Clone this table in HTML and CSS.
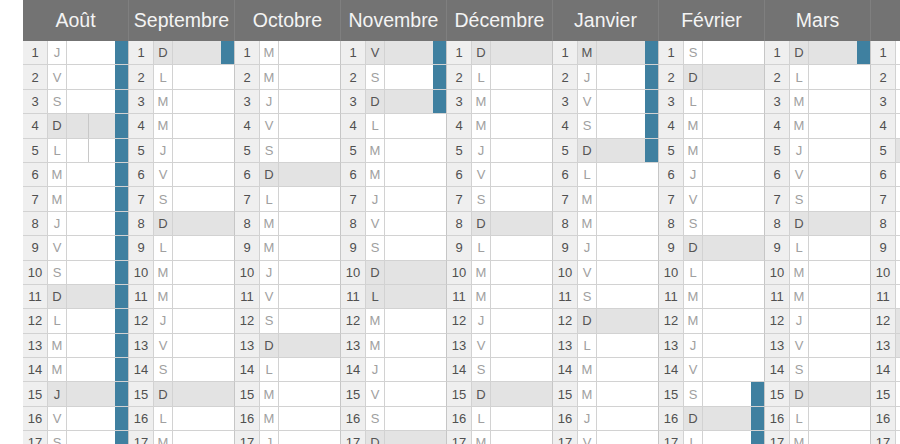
FILE: index.html
```html
<!DOCTYPE html>
<html lang="fr">
<head>
<meta charset="utf-8">
<title>Calendrier scolaire</title>
<link rel="stylesheet" href="styles.css">
</head>
<body>
<div class="cal">
  <div class="month">
    <div class="mh">Août</div>
    <div class="row m"><span class="n">1</span><span class="d">J</span><span class="t"></span><span class="k"></span></div>
    <div class="row m"><span class="n">2</span><span class="d">V</span><span class="t"></span><span class="k"></span></div>
    <div class="row m"><span class="n">3</span><span class="d">S</span><span class="t"></span><span class="k"></span></div>
    <div class="row m g"><span class="n">4</span><span class="d">D</span><span class="t split"><span class="s1"></span><span class="s2"></span></span><span class="k"></span></div>
    <div class="row m"><span class="n">5</span><span class="d">L</span><span class="t split"><span class="s1"></span><span class="s2"></span></span><span class="k"></span></div>
    <div class="row m"><span class="n">6</span><span class="d">M</span><span class="t"></span><span class="k"></span></div>
    <div class="row m"><span class="n">7</span><span class="d">M</span><span class="t"></span><span class="k"></span></div>
    <div class="row m"><span class="n">8</span><span class="d">J</span><span class="t"></span><span class="k"></span></div>
    <div class="row m"><span class="n">9</span><span class="d">V</span><span class="t"></span><span class="k"></span></div>
    <div class="row m"><span class="n">10</span><span class="d">S</span><span class="t"></span><span class="k"></span></div>
    <div class="row m g"><span class="n">11</span><span class="d">D</span><span class="t"></span><span class="k"></span></div>
    <div class="row m"><span class="n">12</span><span class="d">L</span><span class="t"></span><span class="k"></span></div>
    <div class="row m"><span class="n">13</span><span class="d">M</span><span class="t"></span><span class="k"></span></div>
    <div class="row m"><span class="n">14</span><span class="d">M</span><span class="t"></span><span class="k"></span></div>
    <div class="row m g"><span class="n">15</span><span class="d">J</span><span class="t"></span><span class="k"></span></div>
    <div class="row m"><span class="n">16</span><span class="d">V</span><span class="t"></span><span class="k"></span></div>
    <div class="row m"><span class="n">17</span><span class="d">S</span><span class="t"></span><span class="k"></span></div>
  </div>
  <div class="month">
    <div class="mh">Septembre</div>
    <div class="row m g"><span class="n">1</span><span class="d">D</span><span class="t"></span><span class="k"></span></div>
    <div class="row"><span class="n">2</span><span class="d">L</span><span class="t"></span><span class="k"></span></div>
    <div class="row"><span class="n">3</span><span class="d">M</span><span class="t"></span><span class="k"></span></div>
    <div class="row"><span class="n">4</span><span class="d">M</span><span class="t"></span><span class="k"></span></div>
    <div class="row"><span class="n">5</span><span class="d">J</span><span class="t"></span><span class="k"></span></div>
    <div class="row"><span class="n">6</span><span class="d">V</span><span class="t"></span><span class="k"></span></div>
    <div class="row"><span class="n">7</span><span class="d">S</span><span class="t"></span><span class="k"></span></div>
    <div class="row g"><span class="n">8</span><span class="d">D</span><span class="t"></span><span class="k"></span></div>
    <div class="row"><span class="n">9</span><span class="d">L</span><span class="t"></span><span class="k"></span></div>
    <div class="row"><span class="n">10</span><span class="d">M</span><span class="t"></span><span class="k"></span></div>
    <div class="row"><span class="n">11</span><span class="d">M</span><span class="t"></span><span class="k"></span></div>
    <div class="row"><span class="n">12</span><span class="d">J</span><span class="t"></span><span class="k"></span></div>
    <div class="row"><span class="n">13</span><span class="d">V</span><span class="t"></span><span class="k"></span></div>
    <div class="row"><span class="n">14</span><span class="d">S</span><span class="t"></span><span class="k"></span></div>
    <div class="row g"><span class="n">15</span><span class="d">D</span><span class="t"></span><span class="k"></span></div>
    <div class="row"><span class="n">16</span><span class="d">L</span><span class="t"></span><span class="k"></span></div>
    <div class="row"><span class="n">17</span><span class="d">M</span><span class="t"></span><span class="k"></span></div>
  </div>
  <div class="month">
    <div class="mh">Octobre</div>
    <div class="row"><span class="n">1</span><span class="d">M</span><span class="t"></span><span class="k"></span></div>
    <div class="row"><span class="n">2</span><span class="d">M</span><span class="t"></span><span class="k"></span></div>
    <div class="row"><span class="n">3</span><span class="d">J</span><span class="t"></span><span class="k"></span></div>
    <div class="row"><span class="n">4</span><span class="d">V</span><span class="t"></span><span class="k"></span></div>
    <div class="row"><span class="n">5</span><span class="d">S</span><span class="t"></span><span class="k"></span></div>
    <div class="row g"><span class="n">6</span><span class="d">D</span><span class="t"></span><span class="k"></span></div>
    <div class="row"><span class="n">7</span><span class="d">L</span><span class="t"></span><span class="k"></span></div>
    <div class="row"><span class="n">8</span><span class="d">M</span><span class="t"></span><span class="k"></span></div>
    <div class="row"><span class="n">9</span><span class="d">M</span><span class="t"></span><span class="k"></span></div>
    <div class="row"><span class="n">10</span><span class="d">J</span><span class="t"></span><span class="k"></span></div>
    <div class="row"><span class="n">11</span><span class="d">V</span><span class="t"></span><span class="k"></span></div>
    <div class="row"><span class="n">12</span><span class="d">S</span><span class="t"></span><span class="k"></span></div>
    <div class="row g"><span class="n">13</span><span class="d">D</span><span class="t"></span><span class="k"></span></div>
    <div class="row"><span class="n">14</span><span class="d">L</span><span class="t"></span><span class="k"></span></div>
    <div class="row"><span class="n">15</span><span class="d">M</span><span class="t"></span><span class="k"></span></div>
    <div class="row"><span class="n">16</span><span class="d">M</span><span class="t"></span><span class="k"></span></div>
    <div class="row"><span class="n">17</span><span class="d">J</span><span class="t"></span><span class="k"></span></div>
  </div>
  <div class="month">
    <div class="mh">Novembre</div>
    <div class="row m g"><span class="n">1</span><span class="d">V</span><span class="t"></span><span class="k"></span></div>
    <div class="row m"><span class="n">2</span><span class="d">S</span><span class="t"></span><span class="k"></span></div>
    <div class="row m g"><span class="n">3</span><span class="d">D</span><span class="t"></span><span class="k"></span></div>
    <div class="row"><span class="n">4</span><span class="d">L</span><span class="t"></span><span class="k"></span></div>
    <div class="row"><span class="n">5</span><span class="d">M</span><span class="t"></span><span class="k"></span></div>
    <div class="row"><span class="n">6</span><span class="d">M</span><span class="t"></span><span class="k"></span></div>
    <div class="row"><span class="n">7</span><span class="d">J</span><span class="t"></span><span class="k"></span></div>
    <div class="row"><span class="n">8</span><span class="d">V</span><span class="t"></span><span class="k"></span></div>
    <div class="row"><span class="n">9</span><span class="d">S</span><span class="t"></span><span class="k"></span></div>
    <div class="row g"><span class="n">10</span><span class="d">D</span><span class="t"></span><span class="k"></span></div>
    <div class="row g"><span class="n">11</span><span class="d">L</span><span class="t"></span><span class="k"></span></div>
    <div class="row"><span class="n">12</span><span class="d">M</span><span class="t"></span><span class="k"></span></div>
    <div class="row"><span class="n">13</span><span class="d">M</span><span class="t"></span><span class="k"></span></div>
    <div class="row"><span class="n">14</span><span class="d">J</span><span class="t"></span><span class="k"></span></div>
    <div class="row"><span class="n">15</span><span class="d">V</span><span class="t"></span><span class="k"></span></div>
    <div class="row"><span class="n">16</span><span class="d">S</span><span class="t"></span><span class="k"></span></div>
    <div class="row g"><span class="n">17</span><span class="d">D</span><span class="t"></span><span class="k"></span></div>
  </div>
  <div class="month">
    <div class="mh">Décembre</div>
    <div class="row g"><span class="n">1</span><span class="d">D</span><span class="t"></span><span class="k"></span></div>
    <div class="row"><span class="n">2</span><span class="d">L</span><span class="t"></span><span class="k"></span></div>
    <div class="row"><span class="n">3</span><span class="d">M</span><span class="t"></span><span class="k"></span></div>
    <div class="row"><span class="n">4</span><span class="d">M</span><span class="t"></span><span class="k"></span></div>
    <div class="row"><span class="n">5</span><span class="d">J</span><span class="t"></span><span class="k"></span></div>
    <div class="row"><span class="n">6</span><span class="d">V</span><span class="t"></span><span class="k"></span></div>
    <div class="row"><span class="n">7</span><span class="d">S</span><span class="t"></span><span class="k"></span></div>
    <div class="row g"><span class="n">8</span><span class="d">D</span><span class="t"></span><span class="k"></span></div>
    <div class="row"><span class="n">9</span><span class="d">L</span><span class="t"></span><span class="k"></span></div>
    <div class="row"><span class="n">10</span><span class="d">M</span><span class="t"></span><span class="k"></span></div>
    <div class="row"><span class="n">11</span><span class="d">M</span><span class="t"></span><span class="k"></span></div>
    <div class="row"><span class="n">12</span><span class="d">J</span><span class="t"></span><span class="k"></span></div>
    <div class="row"><span class="n">13</span><span class="d">V</span><span class="t"></span><span class="k"></span></div>
    <div class="row"><span class="n">14</span><span class="d">S</span><span class="t"></span><span class="k"></span></div>
    <div class="row g"><span class="n">15</span><span class="d">D</span><span class="t"></span><span class="k"></span></div>
    <div class="row"><span class="n">16</span><span class="d">L</span><span class="t"></span><span class="k"></span></div>
    <div class="row"><span class="n">17</span><span class="d">M</span><span class="t"></span><span class="k"></span></div>
  </div>
  <div class="month">
    <div class="mh">Janvier</div>
    <div class="row m g"><span class="n">1</span><span class="d">M</span><span class="t"></span><span class="k"></span></div>
    <div class="row m"><span class="n">2</span><span class="d">J</span><span class="t"></span><span class="k"></span></div>
    <div class="row m"><span class="n">3</span><span class="d">V</span><span class="t"></span><span class="k"></span></div>
    <div class="row m"><span class="n">4</span><span class="d">S</span><span class="t"></span><span class="k"></span></div>
    <div class="row m g"><span class="n">5</span><span class="d">D</span><span class="t"></span><span class="k"></span></div>
    <div class="row"><span class="n">6</span><span class="d">L</span><span class="t"></span><span class="k"></span></div>
    <div class="row"><span class="n">7</span><span class="d">M</span><span class="t"></span><span class="k"></span></div>
    <div class="row"><span class="n">8</span><span class="d">M</span><span class="t"></span><span class="k"></span></div>
    <div class="row"><span class="n">9</span><span class="d">J</span><span class="t"></span><span class="k"></span></div>
    <div class="row"><span class="n">10</span><span class="d">V</span><span class="t"></span><span class="k"></span></div>
    <div class="row"><span class="n">11</span><span class="d">S</span><span class="t"></span><span class="k"></span></div>
    <div class="row g"><span class="n">12</span><span class="d">D</span><span class="t"></span><span class="k"></span></div>
    <div class="row"><span class="n">13</span><span class="d">L</span><span class="t"></span><span class="k"></span></div>
    <div class="row"><span class="n">14</span><span class="d">M</span><span class="t"></span><span class="k"></span></div>
    <div class="row"><span class="n">15</span><span class="d">M</span><span class="t"></span><span class="k"></span></div>
    <div class="row"><span class="n">16</span><span class="d">J</span><span class="t"></span><span class="k"></span></div>
    <div class="row"><span class="n">17</span><span class="d">V</span><span class="t"></span><span class="k"></span></div>
  </div>
  <div class="month">
    <div class="mh">Février</div>
    <div class="row"><span class="n">1</span><span class="d">S</span><span class="t"></span><span class="k"></span></div>
    <div class="row g"><span class="n">2</span><span class="d">D</span><span class="t"></span><span class="k"></span></div>
    <div class="row"><span class="n">3</span><span class="d">L</span><span class="t"></span><span class="k"></span></div>
    <div class="row"><span class="n">4</span><span class="d">M</span><span class="t"></span><span class="k"></span></div>
    <div class="row"><span class="n">5</span><span class="d">M</span><span class="t"></span><span class="k"></span></div>
    <div class="row"><span class="n">6</span><span class="d">J</span><span class="t"></span><span class="k"></span></div>
    <div class="row"><span class="n">7</span><span class="d">V</span><span class="t"></span><span class="k"></span></div>
    <div class="row"><span class="n">8</span><span class="d">S</span><span class="t"></span><span class="k"></span></div>
    <div class="row g"><span class="n">9</span><span class="d">D</span><span class="t"></span><span class="k"></span></div>
    <div class="row"><span class="n">10</span><span class="d">L</span><span class="t"></span><span class="k"></span></div>
    <div class="row"><span class="n">11</span><span class="d">M</span><span class="t"></span><span class="k"></span></div>
    <div class="row"><span class="n">12</span><span class="d">M</span><span class="t"></span><span class="k"></span></div>
    <div class="row"><span class="n">13</span><span class="d">J</span><span class="t"></span><span class="k"></span></div>
    <div class="row"><span class="n">14</span><span class="d">V</span><span class="t"></span><span class="k"></span></div>
    <div class="row m"><span class="n">15</span><span class="d">S</span><span class="t"></span><span class="k"></span></div>
    <div class="row m g"><span class="n">16</span><span class="d">D</span><span class="t"></span><span class="k"></span></div>
    <div class="row m"><span class="n">17</span><span class="d">L</span><span class="t"></span><span class="k"></span></div>
  </div>
  <div class="month">
    <div class="mh">Mars</div>
    <div class="row m g"><span class="n">1</span><span class="d">D</span><span class="t"></span><span class="k"></span></div>
    <div class="row"><span class="n">2</span><span class="d">L</span><span class="t"></span><span class="k"></span></div>
    <div class="row"><span class="n">3</span><span class="d">M</span><span class="t"></span><span class="k"></span></div>
    <div class="row"><span class="n">4</span><span class="d">M</span><span class="t"></span><span class="k"></span></div>
    <div class="row"><span class="n">5</span><span class="d">J</span><span class="t"></span><span class="k"></span></div>
    <div class="row"><span class="n">6</span><span class="d">V</span><span class="t"></span><span class="k"></span></div>
    <div class="row"><span class="n">7</span><span class="d">S</span><span class="t"></span><span class="k"></span></div>
    <div class="row g"><span class="n">8</span><span class="d">D</span><span class="t"></span><span class="k"></span></div>
    <div class="row"><span class="n">9</span><span class="d">L</span><span class="t"></span><span class="k"></span></div>
    <div class="row"><span class="n">10</span><span class="d">M</span><span class="t"></span><span class="k"></span></div>
    <div class="row"><span class="n">11</span><span class="d">M</span><span class="t"></span><span class="k"></span></div>
    <div class="row"><span class="n">12</span><span class="d">J</span><span class="t"></span><span class="k"></span></div>
    <div class="row"><span class="n">13</span><span class="d">V</span><span class="t"></span><span class="k"></span></div>
    <div class="row"><span class="n">14</span><span class="d">S</span><span class="t"></span><span class="k"></span></div>
    <div class="row g"><span class="n">15</span><span class="d">D</span><span class="t"></span><span class="k"></span></div>
    <div class="row"><span class="n">16</span><span class="d">L</span><span class="t"></span><span class="k"></span></div>
    <div class="row"><span class="n">17</span><span class="d">M</span><span class="t"></span><span class="k"></span></div>
  </div>
  <div class="month">
    <div class="mh">Avril</div>
    <div class="row"><span class="n">1</span><span class="d">M</span><span class="t"></span><span class="k"></span></div>
    <div class="row"><span class="n">2</span><span class="d">J</span><span class="t"></span><span class="k"></span></div>
    <div class="row"><span class="n">3</span><span class="d">V</span><span class="t"></span><span class="k"></span></div>
    <div class="row"><span class="n">4</span><span class="d">S</span><span class="t"></span><span class="k"></span></div>
    <div class="row g"><span class="n">5</span><span class="d">D</span><span class="t"></span><span class="k"></span></div>
    <div class="row"><span class="n">6</span><span class="d">L</span><span class="t"></span><span class="k"></span></div>
    <div class="row"><span class="n">7</span><span class="d">M</span><span class="t"></span><span class="k"></span></div>
    <div class="row"><span class="n">8</span><span class="d">M</span><span class="t"></span><span class="k"></span></div>
    <div class="row"><span class="n">9</span><span class="d">J</span><span class="t"></span><span class="k"></span></div>
    <div class="row"><span class="n">10</span><span class="d">V</span><span class="t"></span><span class="k"></span></div>
    <div class="row"><span class="n">11</span><span class="d">S</span><span class="t"></span><span class="k"></span></div>
    <div class="row g"><span class="n">12</span><span class="d">D</span><span class="t"></span><span class="k"></span></div>
    <div class="row g"><span class="n">13</span><span class="d">L</span><span class="t"></span><span class="k"></span></div>
    <div class="row"><span class="n">14</span><span class="d">M</span><span class="t"></span><span class="k"></span></div>
    <div class="row"><span class="n">15</span><span class="d">M</span><span class="t"></span><span class="k"></span></div>
    <div class="row"><span class="n">16</span><span class="d">J</span><span class="t"></span><span class="k"></span></div>
    <div class="row"><span class="n">17</span><span class="d">V</span><span class="t"></span><span class="k"></span></div>
  </div>
</div>
</body>
</html>
```
FILE: styles.css
```css
* { box-sizing: border-box; }

html, body {
  margin: 0;
  padding: 0;
  background: #ffffff;
  overflow: hidden;
}

body {
  width: 900px;
  height: 444px;
  font-family: "Liberation Sans", Arial, Helvetica, sans-serif;
}

.cal {
  display: flex;
  margin-left: 23px;
  width: 877px;
  overflow: hidden;
}

.month {
  flex: 0 0 106px;
  display: flex;
  flex-direction: column;
}

.mh {
  height: 41px;
  background: #737373;
  color: #f4f4f4;
  font-size: 19.5px;
  display: flex;
  align-items: center;
  justify-content: center;
  border-right: 1px solid #7f7f7f;
  white-space: nowrap;
}

.row {
  height: 24.4px;
  flex: 0 0 24.4px;
  display: flex;
  border-bottom: 1px solid #d2d2d2;
  border-right: 1px solid #c6c6c6;
  background: #ffffff;
  font-size: 13px;
}

.row.g {
  background: #e3e3e3;
}

.n {
  flex: 0 0 25px;
  background: #efefef;
  border-right: 1px solid #d2d2d2;
  color: #505050;
  display: flex;
  align-items: center;
  justify-content: center;
}

.d {
  flex: 0 0 19px;
  border-right: 1px solid #d2d2d2;
  color: #a0a0a0;
  display: flex;
  align-items: center;
  justify-content: center;
}

.row.g .d {
  color: #555555;
}

.t {
  flex: 1 1 auto;
  display: flex;
}

.split .s1 {
  flex: 0 0 22px;
  border-right: 1px solid #c8c8c8;
}

.split .s2 {
  flex: 1 1 auto;
}

.k {
  flex: 0 0 13px;
}

.row.m .k {
  background: #3f80a0;
}
```
